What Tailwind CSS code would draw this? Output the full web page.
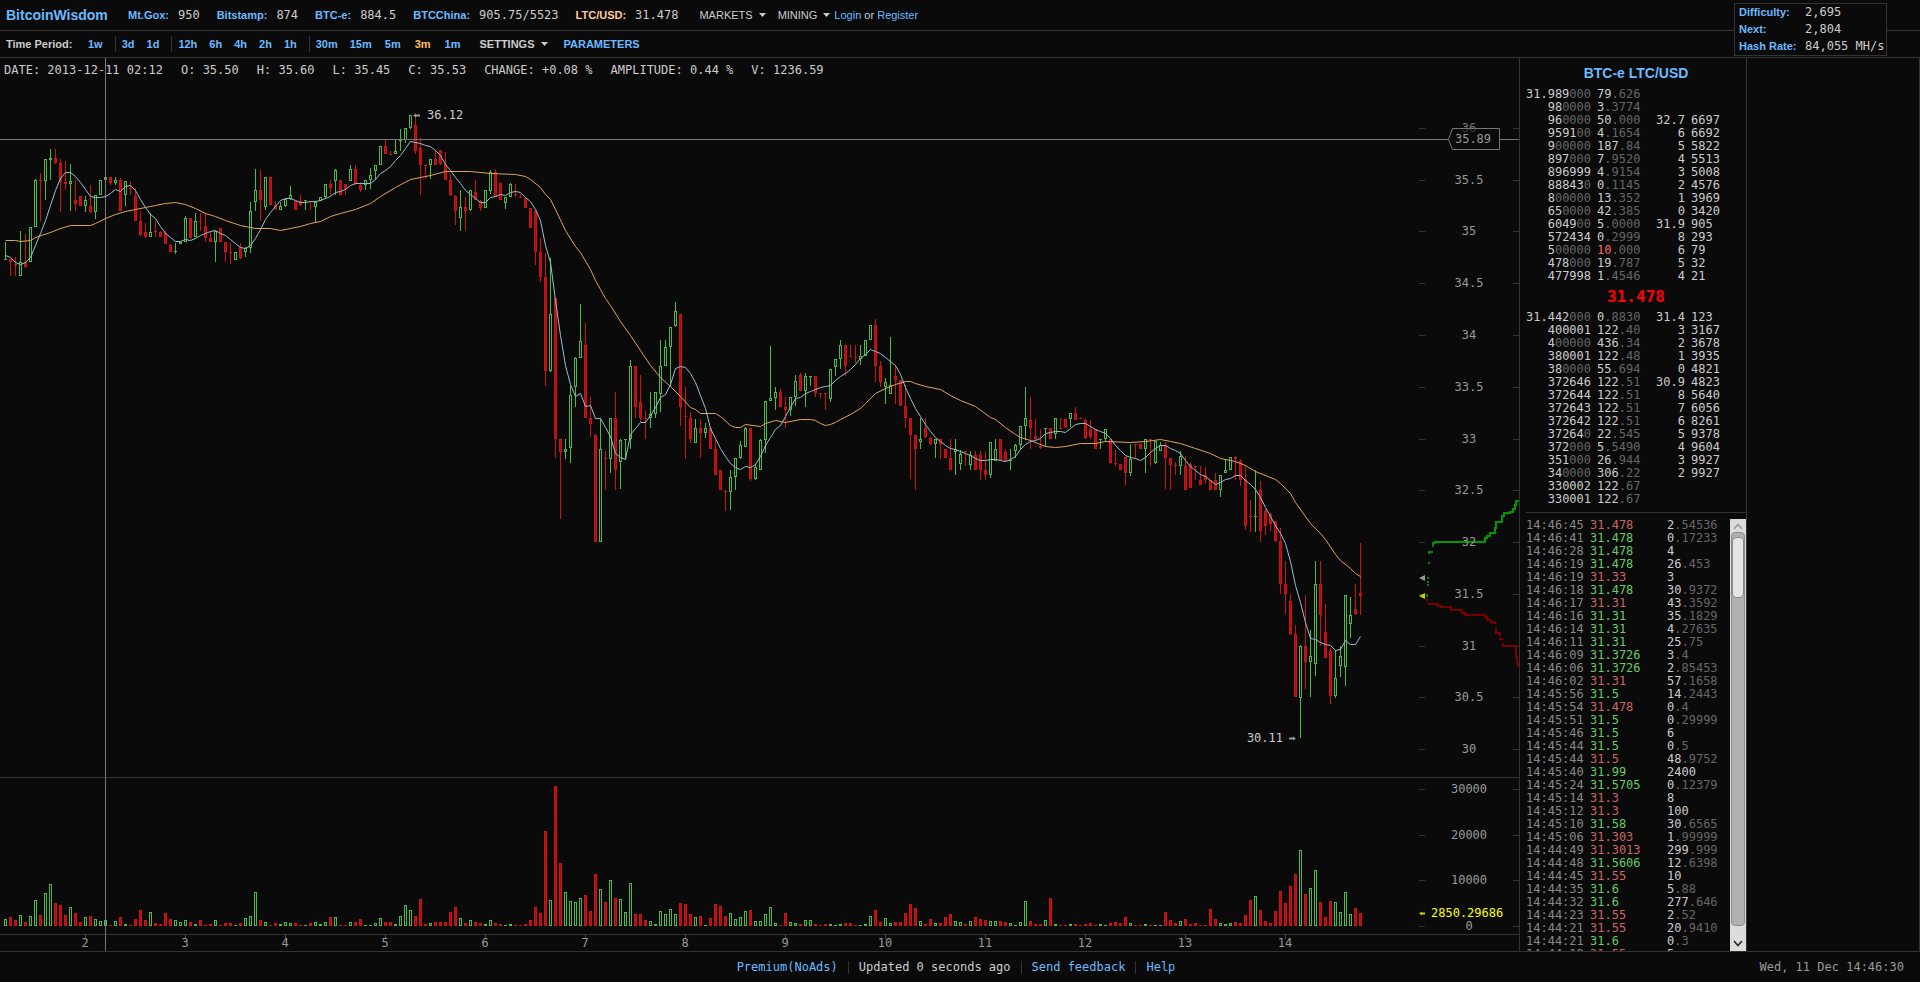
<!DOCTYPE html>
<html lang="en">
<head>
  <meta charset="UTF-8">
  <meta name="viewport" content="width=device-width, initial-scale=1">
  <title>31.478 BTC-e LTC/USD - BitcoinWisdom</title>
  <script src="https://cdn.jsdelivr.net/npm/@tailwindcss/browser@4"></script>
</head>
<body class="bg-[#0a0a0a] text-[#cccccc] font-['DejaVu_Sans_Mono',monospace] text-xs leading-[13px] h-screen flex flex-col overflow-hidden">

  <!-- Markets -->
  <header class="h-[31px] shrink-0 border-b border-[#333333] flex items-center pl-1.5 pb-1 pt-1 whitespace-nowrap">
    <a href="#" class="font-['Liberation_Sans',sans-serif] font-bold text-sm text-[#6bbaff] w-[122px]">BitcoinWisdom</a>
    <nav class="flex gap-[17px]">
      <a href="#" class="flex gap-[9px]"><b class="font-['Liberation_Sans',sans-serif] text-[11px] text-[#6bbaff]">Mt.Gox:</b>950</a>
      <a href="#" class="flex gap-[9px]"><b class="font-['Liberation_Sans',sans-serif] text-[11px] text-[#6bbaff]">Bitstamp:</b>874</a>
      <a href="#" class="flex gap-[9px]"><b class="font-['Liberation_Sans',sans-serif] text-[11px] text-[#6bbaff]">BTC-e:</b>884.5</a>
      <a href="#" class="flex gap-[9px]"><b class="font-['Liberation_Sans',sans-serif] text-[11px] text-[#6bbaff]">BTCChina:</b>905.75/5523</a>
      <a href="#" class="flex gap-[9px]"><b class="font-['Liberation_Sans',sans-serif] text-[11px] text-[#ffcc99]">LTC/USD:</b>31.478</a>
    </nav>
    <div class="flex items-center font-['Liberation_Sans',sans-serif] text-[11px] ml-[21px]">
      <button class="flex items-center gap-1.5">MARKETS <svg width="7" height="4"><path d="M0 0h7L3.500 4z" fill="#cccccc"/></svg></button>
      <button class="flex items-center gap-1.5 ml-3">MINING <svg width="7" height="4"><path d="M0 0h7L3.500 4z" fill="#cccccc"/></svg></button>
      <span class="ml-1"><a href="#" class="text-[#6bbaff]">Login</a> or <a href="#" class="text-[#6bbaff]">Register</a></span>
    </div>
  </header>

  <!-- Periods -->
  <div class="h-[27px] shrink-0 border-b border-[#333333] flex items-center pl-1.5 font-['Liberation_Sans',sans-serif] text-[11px] font-bold text-[#6bbaff]">
    <span class="text-[#cccccc] w-[76px]">Time Period:</span>
    <button class="px-1.5">1w</button>
    <i class="w-px h-4 bg-[#333333] ml-1.5"></i>
    <button class="px-1.5">3d</button>
    <button class="px-1.5">1d</button>
    <i class="w-px h-4 bg-[#333333] ml-1.5"></i>
    <button class="px-1.5">12h</button>
    <button class="px-1.5">6h</button>
    <button class="px-1.5">4h</button>
    <button class="px-1.5">2h</button>
    <button class="px-1.5">1h</button>
    <i class="w-px h-4 bg-[#333333] ml-1.5"></i>
    <button class="px-1.5">30m</button>
    <button class="px-1.5">15m</button>
    <button class="px-[7px]">5m</button>
    <button class="px-[7px] text-[#ffbb66]">3m</button>
    <button class="px-[7px]">1m</button>
    <button class="flex items-center gap-1.5 ml-3 text-[#cccccc]">SETTINGS <svg width="7" height="4"><path d="M0 0h7L3.500 4z" fill="#cccccc"/></svg></button>
    <button class="ml-4">PARAMETERS</button>
  </div>

  <!-- Network box -->
  <dl class="absolute right-[33px] top-[3px] w-[153px] h-[53px] bg-[#0a0a0a] border border-[#333333] grid grid-cols-[66px_1fr] leading-[17px] pl-1 whitespace-nowrap">
    <dt class="font-['Liberation_Sans',sans-serif] text-[11px] font-bold text-[#6bbaff]">Difficulty:</dt><dd>2,695</dd>
    <dt class="font-['Liberation_Sans',sans-serif] text-[11px] font-bold text-[#6bbaff]">Next:</dt><dd>2,804</dd>
    <dt class="font-['Liberation_Sans',sans-serif] text-[11px] font-bold text-[#6bbaff]">Hash Rate:</dt><dd>84,055 MH/s</dd>
  </dl>

  <main class="flex-1 min-h-0 flex border-b border-[#333333]">
    <section class="flex-1 min-w-0 relative">
      <svg id="chart" class="block w-full h-full font-['DejaVu_Sans_Mono',monospace] text-xs"></svg>
      <div class="absolute left-1 top-1.5 flex gap-[18px] whitespace-pre">
        <span>DATE: 2013-12-11 02:12</span><span>O: 35.50</span><span>H: 35.60</span><span>L: 35.45</span><span>C: 35.53</span><span>CHANGE: +0.08 %</span><span>AMPLITUDE: 0.44 %</span><span>V: 1236.59</span>
      </div>
    </section>

    <!-- Order book and trades -->
    <aside class="w-[228px] shrink-0 border-x border-[#333333] flex flex-col">
      <h1 class="font-['Liberation_Sans',sans-serif] font-bold text-sm leading-[18px] text-[#6bbaff] text-center mt-1.5 mb-1.5 pl-1.5">BTC-e LTC/USD</h1>
      <div class="flex pl-1.5">
        <table class="w-[120px]"><tbody id="asks"></tbody></table>
        <table class="w-20"><tbody id="askSum"></tbody></table>
      </div>
      <div class="text-[#ff0000] font-bold text-base leading-7 text-center pl-1.5">31.478</div>
      <div class="flex pl-1.5">
        <table class="w-[120px]"><tbody id="bids"></tbody></table>
        <table class="w-20"><tbody id="bidSum"></tbody></table>
      </div>
      <div class="border-t border-[#333333] ml-1.5 mt-1.5"></div>
      <div class="flex-1 min-h-0 flex mt-1.5 pl-1.5">
        <div class="flex-1 overflow-hidden">
          <table class="w-full"><tbody id="trades"></tbody></table>
        </div>
        <div class="w-4 bg-[#dedcda] flex flex-col px-px">
          <svg class="h-[13px] w-full" viewBox="0 0 14 13"><path d="M3 10l4-4.500 4 4.500" fill="none" stroke="#999999" stroke-width="1.500"/></svg>
          <div class="flex-1 bg-[#b2b0ae] border border-[#8e8c8a] rounded-sm pt-1">
            <div class="h-[61px] bg-[#e6e5e4] border border-[#8a8886] rounded-sm"></div>
          </div>
          <svg class="h-[25px] w-full" viewBox="0 0 14 25"><path d="M3 15l4 4.500 4-4.500" fill="none" stroke="#222222" stroke-width="1.500"/></svg>
        </div>
      </div>
    </aside>
    <div class="w-[173px] shrink-0 border-r border-[#333333]"></div>
  </main>

  <footer class="h-[30px] shrink-0 relative flex items-center justify-center pr-2">
    <a href="#" class="text-[#6bbaff] px-2.5">Premium(NoAds)</a>
    <span class="border-l border-[#333333] px-2.5">Updated 0 seconds ago</span>
    <a href="#" class="text-[#6bbaff] border-l border-[#333333] px-2.5">Send feedback</a>
    <a href="#" class="text-[#6bbaff] border-l border-[#333333] px-2.5">Help</a>
    <time class="absolute right-4 text-[#999999]">Wed, 11 Dec 14:46:30</time>
  </footer>

  <script>
    // color, high, body top, body bottom, low (screen rows)
    const candles = `g242 259 260 260,r259 259 262 276,r257 264 264 276,g231 262 276 276,r234 262 267 268,g227 227 262 262,g179 180 227 227,r173 180 180 221,g159 159 181 200,g149 158 160 180
r149 158 163 164,r159 163 182 212,r161 182 184 190,g164 181 184 211,r180 200 204 211,r196 196 206 206,g196 200 206 212,r185 206 212 213,g195 195 212 219,g180 180 195 195
g169 177 180 185,r177 177 183 185,g177 180 183 185,r178 180 211 211,g181 181 195 206,r181 188 188 195,r188 196 221 221,r211 221 235 236,r223 232 237 238,g213 232 237 237
r221 231 231 237,r231 232 237 237,r231 233 244 244,r244 245 252 252,g243 251 251 254,g242 242 244 244,g216 218 242 242,r218 218 238 239,g213 221 237 237,r213 221 221 231
r213 226 238 242,r231 238 242 242,g231 231 242 262,r228 228 242 242,r242 242 252 262,r243 252 252 264,g252 252 260 260,r243 247 258 259,g247 248 252 257,g202 211 248 253
g169 190 202 211,r170 190 200 221,g177 177 207 210,r177 177 205 205,r201 205 209 210,g202 206 210 210,g199 199 206 207,g186 195 199 200,r201 201 210 210,r195 201 205 206
g200 200 201 210,r201 201 201 210,g201 202 207 222,g197 197 201 201,g184 184 197 198,r180 184 188 196,g169 170 181 195,r180 180 195 195,r184 184 189 195,g165 169 181 181
r165 169 184 185,r182 185 190 192,g180 180 185 190,g168 175 180 189,g165 165 171 180,g146 146 165 165,r140 146 154 154,r151 154 154 154,g140 151 154 154,g129 140 140 151
g128 128 140 143,g115 115 128 129,r114 125 151 154,r138 148 165 195,r164 165 165 179,g159 159 165 179,r150 159 165 165,r150 150 164 165,r152 164 180 180,r174 180 195 196
r195 196 211 225,g190 207 218 231,r197 207 211 231,g190 190 210 211,r180 192 200 200,r200 201 208 211,g190 190 208 208,g170 172 191 194,r169 172 197 197,r183 183 200 200
g197 197 203 209,g183 184 197 197,r184 194 194 197,r194 197 197 197,r198 198 208 208,r208 208 228 228,r210 211 252 265,r238 252 277 282,r253 277 371 386,g258 314 371 372
r298 298 439 458,r439 439 452 519,g439 449 452 459,g385 395 448 463,g357 358 387 407,g304 341 358 358,r323 345 418 418,r397 418 424 437,r434 435 542 542,g418 449 542 542
r451 458 458 490,g418 418 459 473,r392 418 470 490,g439 440 462 489,g439 439 440 460,g360 366 439 449,r366 366 407 418,r375 402 418 422,r411 418 418 439,g392 414 418 428
g392 392 414 418,g340 366 394 412,g340 347 366 366,g327 327 347 386,g302 311 326 327,r314 314 407 426,r387 416 416 459,r412 418 439 443,g419 428 443 443,r419 428 433 458
g423 428 433 438,r428 428 449 449,r438 449 475 475,r470 470 490 490,r490 491 491 511,g470 477 492 510,g458 458 477 490,g441 445 458 459,g427 428 447 447,r428 428 479 481
g464 467 479 480,g439 440 470 470,g401 401 440 453,g346 398 401 401,g387 392 398 410,r389 392 407 407,r397 407 410 428,g397 397 410 416,g375 381 397 406,r373 375 391 391
g373 376 391 407,g376 376 377 386,r376 376 393 397,r393 393 394 399,r393 393 394 410,g369 369 399 402,g359 359 367 376,g340 345 359 369,r345 345 366 376,r345 356 356 357
r345 357 357 363,g345 356 359 365,g340 340 356 356,g325 325 340 340,r319 325 366 382,r361 366 382 387,g378 382 387 404,g337 385 394 394,r365 376 380 404,r380 380 406 406
r385 406 418 428,r418 418 435 479,r435 435 449 490,g418 439 442 449,r418 428 437 438,r437 438 444 445,g439 439 444 458,r439 439 444 459,r449 449 458 458,r439 458 470 470
g439 449 452 475,g450 454 464 470,r451 451 452 466,g451 455 465 470,r451 455 470 470,r451 455 470 480,r451 470 475 480,g442 442 475 478,g439 449 461 461,r439 439 460 461
r449 452 461 462,g449 460 460 470,g444 445 451 458,g426 426 445 449,g387 418 426 440,r397 420 428 449,r419 436 439 440,r429 446 448 449,g428 428 429 447,r428 428 439 439
g418 418 434 439,r418 428 428 429,r419 419 427 428,g413 413 419 427,r407 413 420 420,r417 418 418 418,r419 420 438 439,r420 429 437 439,r429 429 449 449,g439 439 440 449
g429 429 439 441,r439 439 463 463,r450 463 463 466,r464 464 470 470,r457 457 473 485,g444 459 473 476,r444 444 445 458,r444 444 449 449,g439 439 449 473,r439 439 440 466
g441 441 463 464,g442 445 451 451,r442 445 458 489,r458 458 465 490,r462 465 465 475,g451 456 466 475,r456 466 490 490,r462 464 488 488,r466 466 467 480,r466 480 485 485
r467 475 480 484,r480 480 490 490,r473 480 490 490,g475 475 490 497,g459 470 473 473,g457 457 470 470,r456 457 459 480,r459 461 480 486,r465 479 526 530,r500 516 516 532
g470 516 516 532,r481 490 531 542,r509 511 526 535,r513 514 524 531,r521 521 541 542,r528 541 584 594,r561 584 594 614,r594 601 634 635,r625 634 697 697,g645 646 698 738
r595 646 662 689,g630 656 662 697,g561 584 664 676,r561 584 615 646,r604 632 658 658,r648 651 696 704,g650 678 696 698,g646 656 666 677,g595 595 667 686,g597 615 624 638
r584 609 614 615,r543 593 596 615`.split(/[,\n]/);

    const volumes = [
      7,9,6,11,4,10,26,11,33,42, 23,21,11,19,13,4,9,10,7,5, 6,1,5,9,2,1,7,16,6,14, 3,2,13,7,6,4,6,4,2,6,
      1,2,6,1,3,3,1,3,8,10, 34,6,4,1,3,2,4,3,3,1, 1,3,4,2,4,9,9,1,1,4, 4,7,1,1,3,8,4,4,2,10,
      21,16,10,27,2,3,4,4,4,14, 19,8,3,6,4,3,2,6,3,2, 1,2,1,1,2,6,19,13,95,26, 140,63,34,25,24,28,31,15,52,37,
      24,46,28,27,14,43,12,12,6,5, 2,15,12,17,12,23,22,12,9,10, 1,8,22,20,10,13,7,9,15,16, 5,5,12,19,3,1,13,4,3,2,
      6,6,2,1,2,2,1,2,3,3, 1,1,2,10,16,4,8,3,4,4, 13,22,18,5,2,7,3,3,9,12, 5,4,2,5,9,7,6,5,5,5,
      4,3,1,4,25,5,2,2,6,28, 2,1,1,2,2,1,2,3,1,2, 1,3,4,3,9,3,1,1,2,1, 1,1,14,6,3,5,7,2,3,1,
      1,17,7,3,2,3,4,3,11,26, 30,16,5,3,15,35,23,40,52,76, 32,38,56,24,9,25,24,14,34,12, 18,13
    ];

    // one value per candle
    const fastMA = [
      255,257,262,264,262,257,245,233,220,205, 190,178,172,172,176,182,189,196,197,197, 196,193,189,191,186,185,190,199,207,214,
      218,226,233,237,241,241,239,240,238,235, 233,231,230,233,235,239,243,247,248,245, 238,229,219,212,206,200,198,198,200,202,
      202,201,201,200,198,196,192,191,189,185, 183,183,183,183,179,173,170,166,160,155, 148,141,142,143,145,146,150,155,164,170,
      177,183,190,194,198,202,202,197,196,194, 195,192,191,192,197,201,209,220,245,262, 300,335,365,384,396,393,406,405,418,418,
      427,436,453,457,459,434,428,422,422,415, 407,397,394,384,368,366,367,373,382,395, 408,428,438,448,456,463,467,469,466,467,
      464,456,445,437,429,425,416,407,398,397, 393,391,389,387,386,385,380,376,373,369, 364,358,354,349,351,353,357,361,365,374,
      387,398,408,416,424,431,437,441,445,448, 449,451,453,455,458,460,460,459,459,460, 461,459,456,449,444,441,440,438,433,432,
      431,431,432,428,424,423,423,426,429,431, 433,438,445,450,455,457,458,460,457,452, 448,445,445,448,450,453,460,466,470,474,
      476,480,484,482,479,478,475,475,480,484, 489,497,507,516,525,533,543,561,585,602, 622,638,639,642,644,645,650,649,640,644,
      644,636
    ];
    const slowMA = "5,240 15,240 20,241 30,240 35,237 50,232 60,228 70,225 90,225 95,223 105,218 115,214 125,211 135,209 145,207 155,205 165,203 175,202 185,204 195,208 205,213 215,216 225,220 240,225 255,228 270,228 280,230 290,228 300,226 310,223 320,221 330,216 340,213 355,209 370,203 380,196 395,187 410,179 420,177 430,175 445,171 470,171 490,173 515,174 525,176 530,179 540,187 545,194 550,199 555,209 565,230 575,246 580,252 590,269 595,280 600,289 605,298 610,305 620,321 630,335 640,350 650,365 660,377 670,386 680,396 690,407 695,409 700,413 715,413 720,416 730,425 735,427 740,427 745,424 760,426 765,423 775,420 785,422 800,419 810,419 815,420 820,423 825,425 830,424 835,422 840,419 850,414 860,408 865,403 875,393 885,388 895,384 905,381 910,381 915,383 925,386 940,389 950,395 960,400 975,406 990,417 995,419 1005,427 1015,434 1020,437 1030,440 1045,446 1055,447 1065,446 1080,443 1095,443 1105,441 1130,442 1145,441 1160,439 1170,441 1180,443 1195,448 1210,453 1220,458 1235,461 1245,465 1255,471 1275,479 1280,483 1290,493 1295,502 1310,523 1320,533 1325,539 1335,554 1340,560 1350,568 1355,573 1360,576";

    const rect = (x, y, w, h, c) => `<rect x="${x}" y="${y}" width="${w}" height="${h}" fill="${c}"/>`;
    const text = (x, y, s, c, a = "middle") => `<text x="${x}" y="${y}" fill="${c}" text-anchor="${a}">${s}</text>`;
    const box = (x, y, h, up) => {
      h = Math.max(h, 1);
      let s = rect(x - 1, y, 3, h, up ? "#4cbb45" : "#cc1414");
      if (h > 2) s += rect(x, y + 1, 1, h - 2, up ? "#0a0a0a" : "#a80f0f");
      return s;
    };

    let g = `<g shape-rendering="crispEdges">`;
    g += rect(0, 777, "100%", 1, "#333333") + rect(0, 934, "100%", 1, "#333333");
    for (let d = 2; d <= 14; d++) g += rect(d * 100 - 115, 934, 1, 5, "#444444");
    [128, 180, 231, 283, 335, 387, 439, 490, 542, 594, 646, 697, 749, 789, 835, 880, 926].forEach(y => {
      g += rect(1419, y, 6, 1, "#333333") + rect(1513, y, 6, 1, "#333333");
    });
    candles.forEach((c, i) => {
      const up = c[0] === "g", x = 5 + i * 5;
      const [hi, top, bot, lo] = c.slice(1).split(" ").map(Number);
      g += rect(x, hi, 1, Math.max(lo - hi, 1), up ? "#4cbb45" : "#cc1414") + box(x, top, bot - top, up);
      g += box(x, 926 - volumes[i], volumes[i], up);
    });
    g += rect(0, 139, 1448, 1, "#777777") + rect(1499, 139, 20, 1, "#777777") + rect(105, 58, 1, 893, "#777777") + `</g>`;

    g += `<polyline points="${slowMA}" transform="translate(.5 .5)" fill="none" stroke="#e0a458"/>`;
    g += `<polyline points="${fastMA.map((y, i) => (5 + i * 5) + "," + y).join(" ")}" transform="translate(.5 .5)" fill="none" stroke="#98bfd2"/>`;

    // market depth
    g += `<g fill="none" shape-rendering="crispEdges"><path d="M1427 597v-3M1428 586v-2M1428 583v-2M1428 579v-2M1429 562v2M1429 554v-2h4M1432 546h1v-3h2v-1" stroke="#008800" stroke-width="2"/>`;
    g += `<path d="M1434 542h51v-4h2v-2h3v-3h5v-5h1v-6h6v-6h2v-3h6v-1h3v-3h2v-4h1v-4h4" stroke="#009900" stroke-width="2"/>`;
    g += `<path d="M1427 599v2M1427 604h11v2h3v1h10v3h11v3h3v2h20v2h2v3h4v2h4v2M1496 627v6h4v3M1499 639h4M1503 643v3h13v11h1v7h1v3" stroke="#7a0000" stroke-width="2"/></g>`;
    g += `<path d="M1419 578l6-3v6z" fill="#999999"/><path d="M1419 596l6-3v6z" fill="#cccc00"/>`;

    // axis labels
    [[35.5, 180], [35, 231], [34.5, 283], [34, 335], [33.5, 387], [33, 439], [32.5, 490], [32, 542], [31.5, 594], [31, 646], [30.5, 697], [30, 749],
     [30000, 789], [20000, 835], [10000, 880], [0, 926]].forEach(([v, y]) => g += text(1469, y + 4, v, "#999999"));
    g += text(1469, 132, 36, "#777777");
    for (let d = 2; d <= 14; d++) g += text(d * 100 - 115, 947, d, "#999999");

    g += `<path d="M1448.500 139.500l4-11h47v21h-47z" fill="#0a0a0a" fill-opacity=".6" stroke="#777777"/>` + text(1473, 143, "35.89", "#999999");
    g += `<path d="M413 115.500l3-2v1h4v2h-4v1z" fill="#999999"/>` + text(427, 119, "36.12", "#cccccc", "start");
    g += `<path d="M1296 738.500l-3-2v1h-4v2h4v1z" fill="#999999"/>` + text(1283, 742, "30.11", "#cccccc", "end");
    g += `<path d="M1419 913.500l3-2v1h3v2h-3v1z" fill="#cccc00"/>` + text(1431, 917, "2850.29686", "#ffff00", "start");
    document.getElementById("chart").innerHTML = `<g transform="translate(0 -58)">${g}</g>`;

    // "|" separates the bright part from the dim part
    const dim = s => { const [a, b = ""] = s.split("|"); return `${a}<span class="text-[#666666]">${b}</span>`; };
    const book = (id, rows) => {
      document.getElementById(id).innerHTML = rows.split(",").map(r => {
        const [p, a] = r.trim().split(" ");
        const red = a === "10|.000" ? "text-[#ff6666]" : "";
        return `<tr><td class="w-16 text-right">${dim(p)}</td><td class="pl-1.5 ${red}">${dim(a)}</td></tr>`;
      }).join("");
    };
    const sums = (id, rows) => {
      document.getElementById(id).innerHTML = rows.split(",").map(r => {
        const [p, a] = r.split(" ");
        return `<tr class="h-[13px]"><td class="w-[39px] text-right">${p}</td><td class="pl-1.5">${a || ""}</td></tr>`;
      }).join("");
    };
    book("asks", "31.989|000 79|.626,98|0000 3|.3774,96|0000 50|.000,9591|00 4|.1654,9|00000 187|.84,897|000 7|.9520,896999 4|.9154,88843|0 0|.1145,8|00000 13|.352,65|0000 42|.385,6049|00 5|.0000,572434 0|.2999,5|00000 10|.000,478|000 19|.787,477998 1|.4546");
    sums("askSum", ",,32.7 6697,6 6692,5 5822,4 5513,3 5008,2 4576,1 3969,0 3420,31.9 905,8 293,6 79,5 32,4 21");
    book("bids", "31.442|000 0|.8830,400001 122|.40,4|00000 436|.34,380001 122|.48,38|0000 55|.694,372646 122|.51,372644 122|.51,372643 122|.51,372642 122|.51,37264|0 22|.545,372|000 5|.5490,351|000 26|.944,34|0000 306|.22,330002 122|.67,330001 122|.67");
    sums("bidSum", "31.4 123,3 3167,2 3678,1 3935,0 4821,30.9 4823,8 5640,7 6056,6 8261,5 9378,4 9604,3 9927,2 9927,,");

    const trades = `46:45 r 31.478 2|.54536,46:41 g 31.478 0|.17233,46:28 g 31.478 4,46:19 g 31.478 26|.453,46:19 r 31.33 3,46:18 g 31.478 30|.9372,46:17 r 31.31 43|.3592,46:16 g 31.31 35|.1829,46:14 g 31.31 4|.27635,46:11 g 31.31 25|.75,46:09 g 31.3726 3|.4,46:06 g 31.3726 2|.85453,46:02 r 31.31 57|.1658,45:56 g 31.5 14|.2443,45:54 r 31.478 0|.4,45:51 g 31.5 0|.29999,45:46 g 31.5 6,45:44 g 31.5 0|.5,45:44 r 31.5 48|.9752,45:40 g 31.99 2400,45:24 g 31.5705 0|.12379,45:14 r 31.3 8,45:12 r 31.3 100,45:10 g 31.58 30|.6565,45:06 r 31.303 1|.99999,44:49 r 31.3013 299|.999,44:48 g 31.5606 12|.6398,44:45 r 31.55 10,44:35 g 31.6 5|.88,44:32 g 31.6 277|.646,44:23 r 31.55 2|.52,44:21 r 31.55 20|.9410,44:21 g 31.6 0|.3,44:18 r 31.55 5`;
    document.getElementById("trades").innerHTML = trades.split(",").map(r => {
      const [t, c, p, a] = r.split(" ");
      return `<tr><td class="w-16 text-[#888888]">14:${t}</td><td class="w-[77px] ${c === "g" ? "text-[#66cc66]" : "text-[#cc6666]"}">${p}</td><td>${dim(a)}</td></tr>`;
    }).join("");
  </script>
</body>
</html>
